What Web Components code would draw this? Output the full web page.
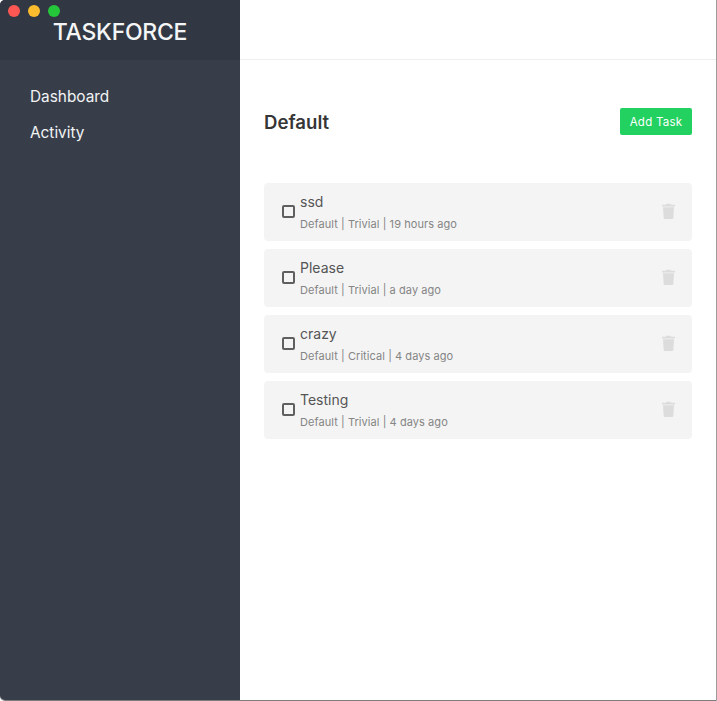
<!DOCTYPE html>
<html><head><meta charset="utf-8"><style>
html,body{margin:0;padding:0;height:100%;overflow:hidden;background:#fff}
body{font-family:Inter,"Liberation Sans",sans-serif}
</style></head><body>
<tf-app>
  <tf-sidebar slot="side" title-text="TASKFORCE">
    <tf-nav>Dashboard</tf-nav>
    <tf-nav>Activity</tf-nav>
  </tf-sidebar>
  <tf-main heading="Default">
    <tf-task name="ssd" meta="Default | Trivial | 19 hours ago"></tf-task>
    <tf-task name="Please" meta="Default | Trivial | a day ago"></tf-task>
    <tf-task name="crazy" meta="Default | Critical | 4 days ago"></tf-task>
    <tf-task name="Testing" meta="Default | Trivial | 4 days ago"></tf-task>
  </tf-main>
</tf-app>
<script>
function def(name, html, init){
  customElements.define(name, class extends HTMLElement{
    constructor(){super();this.attachShadow({mode:'open'}).innerHTML=html;}
    connectedCallback(){ if(init) init(this, this.shadowRoot); }
  });
}
def('tf-app',`<style>
:host{display:flex;box-sizing:border-box;width:717px;height:701px;position:relative;overflow:hidden;
 border-right:1px solid #9b9b9b;border-bottom:1px solid #7d7d7d;border-bottom-left-radius:5px;border-top-left-radius:5px;background:#fff}
.main{flex:1;min-width:0;display:flex}
</style><slot name="side"></slot><div class="main"><slot></slot></div>`);
def('tf-sidebar',`<style>
:host{display:flex;flex-direction:column;width:240px;flex:none;background:#373e4a;color:#fff}
.head{height:60px;background:#313843;position:relative;display:flex;align-items:center;justify-content:center;box-sizing:border-box;padding-top:4px}
h1{margin:0;font:500 23px/28px Inter,"Liberation Sans",sans-serif;letter-spacing:-.25px;color:#f4f5f6;white-space:nowrap}
.lights{position:absolute;left:8px;top:5px;display:flex;gap:8px}
.lights i{display:block;width:12px;height:12px;border-radius:50%}
nav{display:flex;flex-direction:column;gap:12px;padding:25px 30px}
</style><div class="head"><div class="lights"><i style="background:#fc5753"></i><i style="background:#fdbc2e"></i><i style="background:#25c73a"></i></div><h1></h1></div><nav><slot></slot></nav>`,
 (el,s)=>{s.querySelector('h1').textContent=el.getAttribute('title-text');});
def('tf-nav',`<style>
:host{display:block;font:400 15.36px/24px Inter,"Liberation Sans",sans-serif;color:#f2f3f4}
</style><slot></slot>`);
def('tf-main',`<style>
:host{display:block;flex:1;min-width:0;color:#363636}
.top{height:59px;border-bottom:1px solid #eeeeee}
.body{padding:48px 24px 0 24px}
.row{display:flex;justify-content:space-between;align-items:center;height:27px;margin-bottom:48px}
h2{margin:0;font:600 18.6px/28px Inter,"Liberation Sans",sans-serif;color:#363636}
.list{display:flex;flex-direction:column;gap:8px}
</style><div class="top"></div><div class="body"><div class="row"><h2></h2><tf-button>Add Task</tf-button></div><div class="list"><slot></slot></div></div>`,
 (el,s)=>{s.querySelector('h2').textContent=el.getAttribute('heading');});
def('tf-button',`<style>
:host{display:flex;align-items:center;justify-content:center;width:72px;height:27px;background:#23d160;color:#fff;border-radius:2px;
 font:400 11.5px/16px Inter,"Liberation Sans",sans-serif;letter-spacing:.25px}
</style><slot></slot>`);
def('tf-task',`<style>
:host{display:flex;align-items:center;box-sizing:border-box;height:58px;background:#f4f4f4;border-radius:4px;padding:0 16px 0 18px}
.box{width:13px;height:13px;box-sizing:border-box;border:2px solid #5f5f5f;border-radius:2px;flex:none;margin-right:5px;margin-top:-2px}
.txt{flex:1;min-width:0;display:flex;flex-direction:column}
.n{font:400 14px/18px Inter,"Liberation Sans",sans-serif;color:#555;margin-top:0}
.m{font:400 11px/14px "Inter","Liberation Sans",sans-serif;color:#858585;margin-top:6px;letter-spacing:.07px}
svg{display:block;flex:none;margin-top:-2px}
</style><div class="box"></div><div class="txt"><div class="n"></div><div class="m"></div></div>
<svg width="16" height="16" viewBox="0 0 16 16"><path fill="#dcdcdc" d="M2 1.800h4l.5-1h4l.5 1h4V3.500H2zM3 4.300h11l-.7 10.700c0 .5-.4.9-.9.9H4.600c-.5 0-.9-.4-.9-.9z"/></svg>`,
 (el,s)=>{s.querySelector('.n').textContent=el.getAttribute('name');s.querySelector('.m').textContent=el.getAttribute('meta');});
</script>
</body></html>
